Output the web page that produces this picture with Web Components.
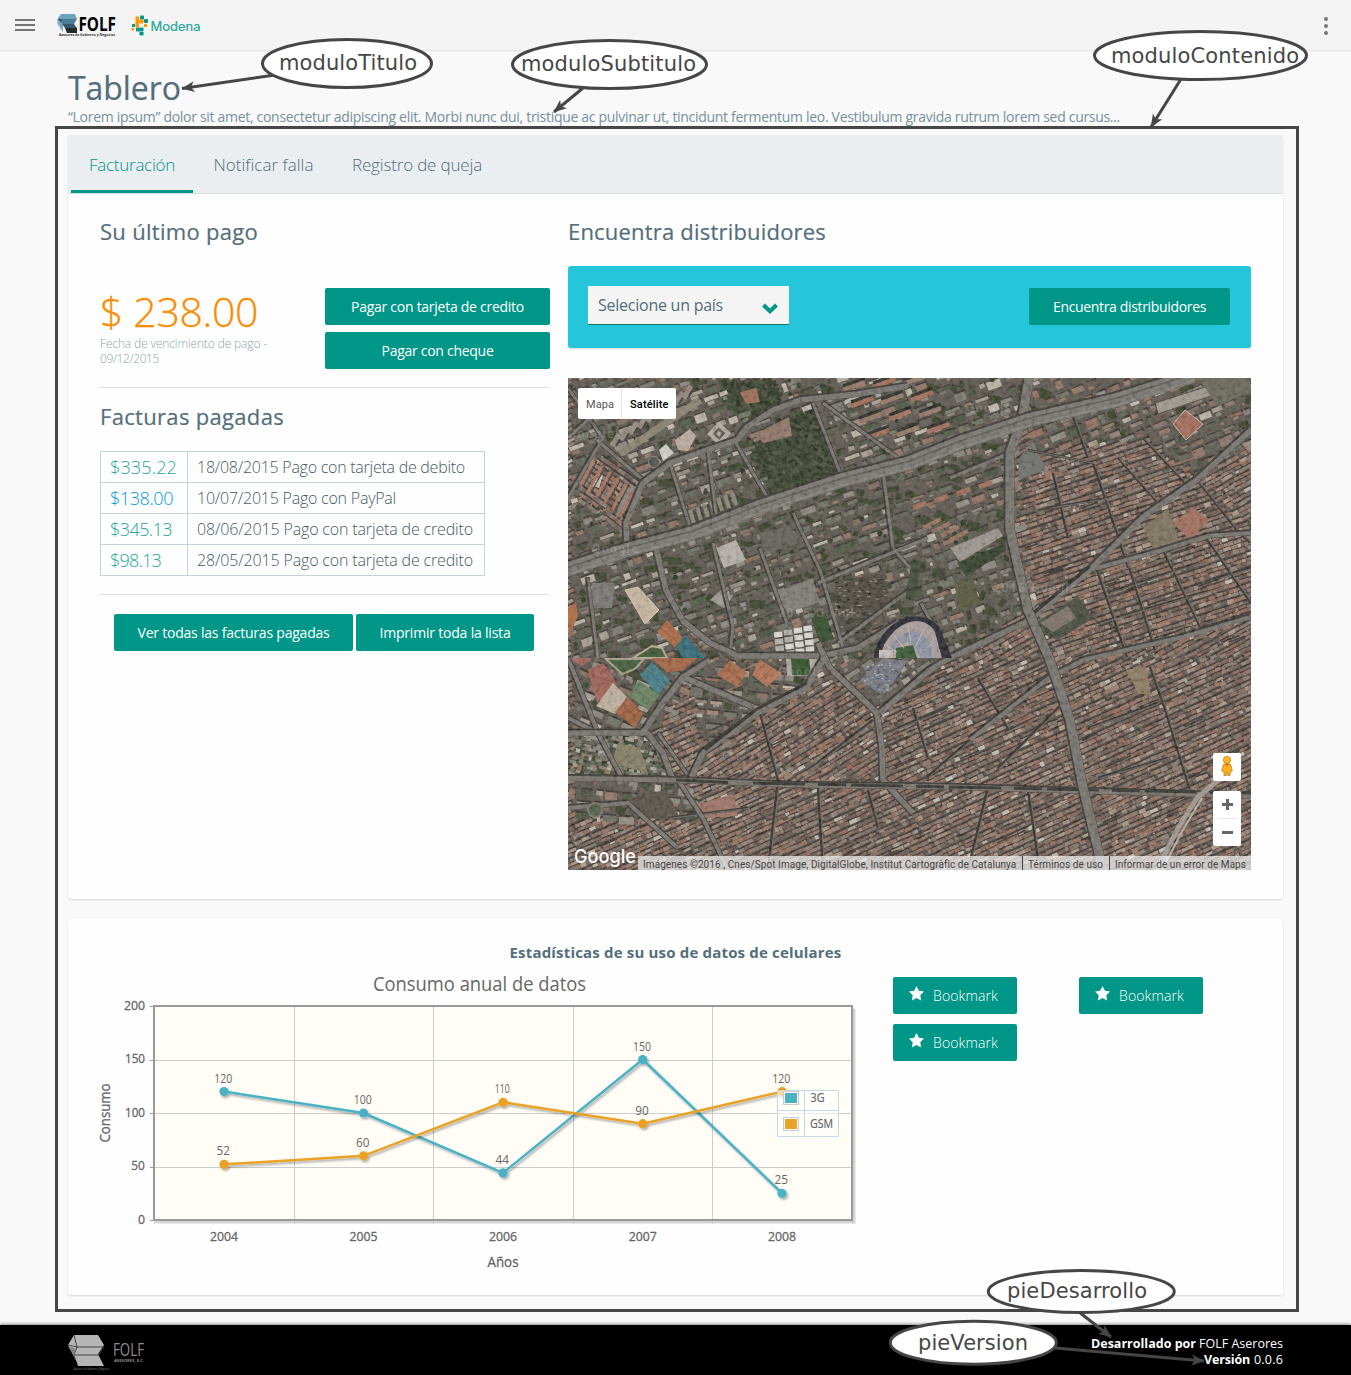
<!DOCTYPE html>
<html lang="es">
<head>
<meta charset="utf-8">
<title>Tablero</title>
<style>
html,body{margin:0;padding:0}
body{font-family:"Open Sans","Noto Sans",sans-serif;background:#f9f9f9;color:#546e7a;overflow:hidden}
</style>
</head>
<body>
<dash-app></dash-app>
<script>
const define = (name, html, setup) => customElements.define(name, class extends HTMLElement {
  connectedCallback() {
    if (this.shadowRoot) return;
    const t = document.createElement('template');
    t.innerHTML = html;
    this.attachShadow({ mode: 'open' }).appendChild(t.content.cloneNode(true));
    if (setup) setup(this, this.shadowRoot);
  }
});

define('dash-app', `
<style>
:host{display:flex;flex-direction:column;height:1375px;position:relative}
main{flex:1;padding:16px 68px 0;box-sizing:border-box}
h1{margin:0;font-weight:400;font-size:32px;line-height:41px;height:40px;color:#546e7a;-webkit-text-stroke:.2px #546e7a}
p{margin:0 0 8px;font-size:14px;line-height:20px;height:20px;color:#78909c}
billing-card{margin-bottom:20px}
</style>
<top-bar></top-bar>
<main>
<h1><fit-text w="113">Tablero</fit-text></h1>
<p><fit-text w="1052">“Lorem ipsum” dolor sit amet, consectetur adipiscing elit. Morbi nunc dui, tristique ac pulvinar ut, tincidunt fermentum leo. Vestibulum gravida rutrum lorem sed cursus...</fit-text></p>
<billing-card></billing-card>
<stats-card></stats-card>
</main>
<page-footer></page-footer>
<callout-layer></callout-layer>`);

define('top-bar', `
<style>
:host{display:flex;align-items:center;height:50px;background:#f4f4f4;border-bottom:1px solid #e5e5e5;box-shadow:0 1px 1px rgba(0,0,0,.03);flex:none}
svg{display:block;overflow:visible}
.burger{margin-left:15px}.folf{margin-left:21px}.mod{margin-left:11px}.dots{margin-left:auto;margin-right:20px}
</style>
<svg class="burger" width="20" height="50" fill="#757575"><path d="M0 19h20v2H0zM0 24h20v2H0zM0 29h20v2H0z"/></svg>
<svg class="folf" width="64" height="50" viewBox="56 0 64 50">
<path d="M61 14H75L77 19H57.500z" fill="#6ba3bd"/><path d="M57.500 19H63L61 23.500z" fill="#315c74"/><path d="M62 19H77L74 24H61z" fill="#4a7d98"/>
<path d="M57.500 19L63 25V32L57.500 24z" fill="#7fa9bd"/><path d="M62 24H74L77 28H65z" fill="#39586b"/><path d="M65 28H77V33H67z" fill="#24292c"/>
<text x="78.500" y="30.500" font-size="19.500" font-weight="700" fill="#000" textLength="37.500" lengthAdjust="spacingAndGlyphs">FOLF</text>
<text x="59" y="36" font-size="4" font-weight="700" fill="#333" textLength="56" lengthAdjust="spacingAndGlyphs">Asesores de Gobierno y Negocios</text></svg>
<svg class="mod" width="74" height="50" viewBox="131 0 74 50">
<g fill="#009688"><rect x="140" y="15.500" width="4" height="4" rx=".8"/><rect x="144" y="19" width="4" height="4" rx=".8"/><rect x="132" y="24" width="3" height="3" rx=".6"/><rect x="136" y="27.500" width="4" height="4" rx=".8"/><rect x="139.500" y="31.500" width="4" height="4" rx=".8"/><rect x="140" y="27.500" width="3.500" height="3.500" rx=".6"/></g>
<g fill="#ff9800"><rect x="135.500" y="16.500" width="3.500" height="3.500" rx=".6"/><rect x="139.500" y="19.500" width="4" height="4" rx=".8"/><rect x="135.500" y="20" width="4" height="4" rx=".8"/><rect x="135.500" y="24" width="3.500" height="3.500" rx=".6"/><rect x="144" y="24" width="3" height="3" rx=".6"/><rect x="131.500" y="28" width="2.500" height="2.500" rx=".6"/></g>
<text x="150.500" y="31" font-size="12.500" font-weight="400" font-family="Inter,sans-serif" fill="#26a69a" stroke="#26a69a" stroke-width=".2" textLength="50" lengthAdjust="spacingAndGlyphs">Modena</text></svg>
<svg class="dots" width="10" height="50" fill="#757575"><circle cx="5" cy="19" r="2"/><circle cx="5" cy="26" r="2"/><circle cx="5" cy="33" r="2"/></svg>`);

define('app-button', `
<style>
:host{display:flex;align-items:center;justify-content:center;height:37px;box-sizing:border-box;background:#009688;color:#fff;border-radius:2px;font-size:14px;line-height:20px}
</style><slot></slot>`, h => h.style.width = h.getAttribute('width') + 'px');

define('tab-bar', `
<style>
:host{display:flex;height:58px;background:#eaeef1;border-bottom:1px solid #dadee1;border-radius:3px 3px 0 0;padding-left:3px;font-size:17px;font-weight:300;line-height:24px;color:#546e7a;gap:2.5px}
.t{padding:18px 18px 0;height:40px}
.on{box-shadow:inset 0 -3px #009688;color:#009688}
</style>
<div class="t on"><fit-text w="86">Facturación</fit-text></div><div class="t"><fit-text w="100">Notificar falla</fit-text></div><div class="t"><fit-text w="130">Registro de queja</fit-text></div>`);

define('billing-card', `
<style>
:host{display:block;height:764px;background:#fefefe;border-radius:3px;box-shadow:0 1px 2px rgba(0,0,0,.14)}
.cols{display:flex;padding:22px 32px 0;gap:18px}
.l{width:450px}.r{width:683px}
h2{font-size:22px;line-height:30px;height:30px;font-weight:400;margin:0;color:#546e7a;-webkit-text-stroke:.2px #546e7a}
.pay{display:flex;justify-content:space-between;margin-top:42px}
.btns{display:flex;flex-direction:column;gap:7px}
.price{font-size:41px;line-height:46px;height:48px;font-weight:300;color:#fb8c00;-webkit-text-stroke:.3px #fb8c00}
.due{font-size:12px;line-height:15px;font-weight:300;color:#90a4ae;display:flex;flex-direction:column}
hr{border:0;height:1px;background:#dde0e2;margin:18px 2px 0 0}
.h{margin-top:13px}
.act{display:flex;gap:3px;margin:19px 0 0 14px}
.find{display:flex;justify-content:space-between;align-items:flex-start;box-sizing:border-box;height:82px;margin-top:20px;background:#26c6da;border-radius:3px;padding:20px 21px 0 20px;box-shadow:0 1px 2px rgba(0,0,0,.16)}
.sel{display:flex;justify-content:space-between;width:201px;box-sizing:border-box;height:39px;background:#f4f4f4;border-bottom:1px solid #00796b;padding:7px 10px 0 10px;font-size:16px;line-height:25px}
.sel svg{margin-top:9px}
.find app-button{margin-top:2px}
city-map{margin-top:30px}
</style>
<tab-bar></tab-bar>
<div class="cols">
<div class="l"><h2><fit-text w="158">Su último pago</fit-text></h2>
<div class="pay"><div><div class="price"><fit-text w="158">$ 238.00</fit-text></div><div class="due"><fit-text w="167">Fecha de vencimiento de pago -</fit-text><fit-text w="59">09/12/2015</fit-text></div></div>
<div class="btns"><app-button width="225"><fit-text w="173">Pagar con tarjeta de credito</fit-text></app-button><app-button width="225"><fit-text w="112">Pagar con cheque</fit-text></app-button></div></div>
<hr><h2 class="h"><fit-text w="184">Facturas pagadas</fit-text></h2>
<bill-table></bill-table><hr>
<div class="act"><app-button width="239"><fit-text w="192">Ver todas las facturas pagadas</fit-text></app-button><app-button width="178"><fit-text w="131">Imprimir toda la lista</fit-text></app-button></div></div>
<div class="r"><h2><fit-text w="258">Encuentra distribuidores</fit-text></h2>
<div class="find"><div class="sel"><fit-text w="125">Selecione un país</fit-text><svg width="18" height="13"><path d="M2.500 3L9 9.300L15.500 3" fill="none" stroke="#009688" stroke-width="4"/></svg></div><app-button width="201"><fit-text w="153">Encuentra distribuidores</fit-text></app-button></div>
<city-map></city-map></div></div>`);

define('bill-table', `
<style>
:host{display:block;margin-top:20px;width:385px}
table{border-collapse:collapse;width:385px;table-layout:fixed}
td{border:1px solid #c5d4dc;height:30px;padding:0 0 2px 9px;font-weight:300;font-size:16px;line-height:24px;color:#455a64;box-sizing:border-box}
td:first-child{width:87px;font-size:18px;color:#26a69a}
fit-text{vertical-align:middle}
tr{height:31px}
td.b{color:#039be5!important}
</style>
<table>
<tr><td><fit-text w="67">$335.22</fit-text></td><td><fit-text w="268">18/08/2015 Pago con tarjeta de debito</fit-text></td></tr>
<tr><td class="b"><fit-text w="63">$138.00</fit-text></td><td><fit-text w="199">10/07/2015 Pago con PayPal</fit-text></td></tr>
<tr><td><fit-text w="62">$345.13</fit-text></td><td><fit-text w="276">08/06/2015 Pago con tarjeta de credito</fit-text></td></tr>
<tr><td><fit-text w="51">$98.13</fit-text></td><td><fit-text w="276">28/05/2015 Pago con tarjeta de credito</fit-text></td></tr>
</table>`);

/* Procedural aerial view: blocks of roofs, avenues, parks and sport grounds. */
function aerial() {
  let s = 20160;
  const R = () => (s = (s * 1664525 + 1013904223) >>> 0) / 4294967296;
  const W = 683, H = 492;
  const poly = (p, f, x = '') => `<polygon points="${p}" fill="${f}" ${x}/>`;
  const inside = (x, y, p) => { let c = false; for (let i = 0, j = p.length - 1; i < p.length; j = i++) if ((p[i][1] > y) !== (p[j][1] > y) && x < (p[j][0] - p[i][0]) * (y - p[i][1]) / (p[j][1] - p[i][1]) + p[i][0]) c = !c; return c; };
  const pts = t => t.split(' ').map(a => a.split(',').map(Number));
  const brick = ['#8e6e61', '#80675c', '#967869', '#755d53', '#9e7e6f', '#87766d', '#6a5a52', '#8c7e74', '#7b6c63', '#ab9686', '#946b5b'];
  const grey = ['#7a7870', '#696a60', '#88847b', '#585c4e', '#4e5643', '#908b80', '#5f6057', '#8e7264', '#a39c90', '#454d3b', '#6d7064', '#826a5d', '#bab3a7'];
  const green = ['#2e3828', '#38422d', '#293221', '#434b34', '#343d2b', '#4b503a'];
  const all = pts('-20,-20 710,-20 710,520 -20,520'), south = pts('-20,280 710,280 710,520 -20,520');
  const zones = [
    { p: pts('174,62 225,32 245,29 272,99 205,119'), c: green, a: .4, t: 2 },
    { p: pts('150,0 205,0 212,24 176,42 152,20'), c: green, a: .4, t: 2 },
    { p: pts('2,119 29,69 75,102 54,152'), c: brick, a: .62, t: 0 },
    { p: pts('0,280 135,280 80,356 0,355'), c: grey, a: .4, t: 1 },
    { p: pts('0,355 80,356 105,400 0,400'), c: green.concat(grey), a: .2, t: 2 },
    { p: pts('0,403 110,403 135,440 0,440'), c: grey, a: .1, t: 1 },
    { p: pts('0,0 460,0 442,75 442,152 460,232 380,280 0,280'), c: grey, a: -.35, t: 1 },
    { p: pts('460,0 683,0 683,60 629,102 575,60 460,72'), c: grey.concat(brick), a: -.4, t: 1 },
    { p: pts('258,280 380,280 312,335'), c: grey, a: -.6, t: 1 },
    { p: pts('115,299 142,282 250,282 239,309 135,375'), c: grey.concat(brick), a: .1, t: 1 },
    { p: pts('135,375 240,309 282,309 310,335 315,402 122,402'), c: brick, a: -.55, t: 0 },
    { p: pts('460,72 575,60 683,152 683,239 482,282 442,152'), c: brick, a: -.32, t: 0 },
    { p: south, c: brick, a: -.42, t: 0 },
    { p: all, c: brick, a: -.5, t: 0 },
  ];
  const order = [], b = {};
  const quad = (x, y, w, h, a, c) => {
    const u = Math.cos(a), v = Math.sin(a);
    const f = (i, j) => (x + i * u - j * v).toFixed(1) + ' ' + (y + i * v + j * u).toFixed(1);
    if (!b[c]) { b[c] = []; order.push(c); }
    b[c].push('M' + f(0, 0) + 'L' + f(w, 0) + 'L' + f(w, h) + 'L' + f(0, h) + 'z');
  };
  b['#38332f'] = []; order.push('#38332f');
  b['#37402c'] = []; order.push('#37402c');
  zones.forEach(z => {
    const u = Math.cos(z.a), v = Math.sin(z.a);
    let row = 0;
    for (let q = -620; q < 900;) {
      const rh = z.t === 1 ? 5 + R() * 5 : z.t === 2 ? 4 : 3.2 + R() * 1.8;
      row++;
      const gap = z.t === 1 ? 2 + R() * 3 : z.t === 2 ? -1 : (row % 3 ? .3 : 1.8);
      for (let k = -420; k < 900;) {
        const len = z.t === 1 ? 4 + R() * 12 : z.t === 2 ? 3 + R() * 3 : 2.5 + R() * 6;
        const sp = z.t === 1 ? 1.5 + R() * 4 : z.t === 2 ? -1 : R() < .08 ? 3 : .3;
        const x = k * u - q * v, y = k * v + q * u;
        k += len + sp;
        if (x < -12 || x > W + 5 || y < -12 || y > H + 5) continue;
        if (zones.find(o => inside(x, y, o.p)) !== z) continue;
        const r = R();
        if (z.t === 1 && r < .17) { quad(x, y, len, rh, z.a + R(), '#37402c'); continue; }
        let c = z.c[R() * z.c.length | 0];
        if (z.t !== 2 && r > .975) c = '#c5bcb0';
        quad(x + 1, y - 1.6, len, 2.5, z.a, '#38332f');
        if (z.t === 1 && r > .55) {
          quad(x, y, len, rh * .5, z.a, c);
          quad(x + rh * .4, y + rh * .5, len * .5, rh * .4, z.a, z.c[R() * z.c.length | 0]);
        } else quad(x + R() * .8, y + R() * .8, len, rh * (.65 + R() * .35), z.a, c);
        if (z.t === 0 && R() < .4) quad(x + R() * len, y + R() * 2, 1.6, 1.3, z.a, R() < .6 ? '#b8a293' : '#463f38');
      }
      q += rh + gap;
    }
  });
  const layer = order.map(c => `<path d="${b[c].join('')}" fill="${c}"/>`).join('');

  let rows = '';
  for (let i = 0; i < 110; i++) {
    const x = R() * W, y = 290 + R() * 202;
    if (x < 140 && y < 440) continue;
    const l = 12 + R() * 20, a = -.42;
    rows += `<path d="M${x.toFixed(1)} ${y.toFixed(1)}l${(l * Math.cos(a)).toFixed(1)} ${(l * Math.sin(a)).toFixed(1)}" stroke="${R() < .5 ? '#3b3531' : '#9c6f5c'}" stroke-width="1.600"/>`;
  }
  for (let i = 0; i < 60; i++) {
    const x = 450 + R() * 220, y = 80 + R() * 185, l = 10 + R() * 18;
    rows += `<path d="M${x.toFixed(1)} ${y.toFixed(1)}l${(l * .94).toFixed(1)} ${(-l * .33).toFixed(1)}" stroke="${R() < .5 ? '#38332f' : '#9c705d'}" stroke-width="1.600"/>`;
  }
  /* Tree canopy along the avenues and between the northern blocks. */
  for (let i = 0; i < 260; i++) {
    const x = R() * 450, y = R() * 275;
    rows += `<circle cx="${x.toFixed(1)}" cy="${y.toFixed(1)}" r="${(1 + R() * 1.8).toFixed(1)}" fill="${green[R() * 6 | 0]}"/>`;
  }
  const road = (d, w, c = '#75726d') => `<path d="${d}" stroke="#393632" stroke-width="${w + 2}" transform="translate(-.8 -.8)"/><path d="${d}" stroke="${c}" stroke-width="${w}"/>`;
  const alley = d => `<path d="${d}" stroke="#302d2b" stroke-width="2.500"/><path d="${d}" stroke="#68635e" stroke-width="1.200" transform="translate(1.600 .4)"/>`;
  const roads =
    alley('M529 192L559 279M559 182L587 272M595 172L632 249M525 85L549 155M549 155L560 190M629 102L669 152L683 165M635 155L683 225M485 95L500 160M500 25L520 80M550 80L590 125M575 60L620 108M530 245L640 213M540 215L630 185M650 200L683 190M460 72L525 85M480 130L540 120') +
    alley('M249 385L305 342M359 399L402 362M192 335L210 402M210 402L200 492M582 289L595 325L622 412M420 409L400 492M500 320L430 390M250 410L255 492M300 412L310 450M460 412L470 480M100 440L180 430M520 350L590 325M530 400L600 380M330 350L380 330M345 330L360 380M410 300L440 350') +
    road('M0 10L35 60L0 120M0 60L55 10M75 102L29 62M102 85L124 155M140 72L150 150M165 60L205 129M245 25L275 102M225 135L252 192L275 269M192 170L219 245M145 165L165 249L162 278M20 200L30 280M255 25L330 80M270 265L345 210M315 92L325 170L342 190M353 225L383 280M382 100L442 75M250 205L360 160M90 355L122 400', 3) +
    road('M522 192L595 172L640 158L683 155M110 402L135 440L160 492M0 340L30 355L55 402M0 280L30 355M0 430L60 425L110 470', 4) +
    road('M59 172L58 145L75 105L102 85L139 72L169 62L179 49L205 32L232 22L290 16L340 8M88 170L98 212L115 243L142 265L170 278L255 278L290 270L330 245', 5.5) +
    road('M-8 355H75L92 329L115 299L142 282M75 350L95 375L105 402M115 299L185 329M122 402L135 375L189 335L239 309L256 280M250 265L262 290L282 309L309 335L314 369L315 402L345 435M312 335L362 292L382 280L462 242L522 192L575 139L629 102L683 52', 5.5) +
    `<path d="M137 372L189 331L239 305M402 362L482 295M462 238L522 188" stroke="#302e2c" stroke-width="3"/>` +
    road('M402 362L482 299L515 282L615 259L683 239', 4) +
    road('M-8 400L102 402L225 407L382 409L683 418', 5, '#77716b') + '<path d="M108 402L170 405M185 405L683 415" stroke="#33302e" stroke-width="3" stroke-dasharray="52 13 28 5"/>' +
    road('M462 -5L454 42L442 75L442 152L460 232L482 282L502 342L515 409L535 492', 9) +
    road('M-8 194L59 172L125 155L192 129L275 102L342 85L392 65L462 42L549 22L625 -2', 14, '#787571') +
    `<path d="M-8 192L59 170L125 153L192 127L275 100L342 83L392 63L462 40L549 20L625 -4" stroke="#54584c" stroke-width="1.500"/><path d="M-8 199L59 177L125 160L192 134L275 107L342 90L392 70L462 47L549 27L640 -2" stroke="#918d86" stroke-width=".8"/>` +
    `<path d="M589 492L610 450L629 420L655 398" stroke="#a19990" stroke-width="5"/><path d="M594 492L616 450L634 420" stroke="#b9b0a7" stroke-width="2"/><path d="M349 182L342 222" stroke="#3d4635" stroke-width="10"/>`;
  let white = '';
  for (let i = 0; i < 4; i++) for (let j = 0; j < 4; j++) white += `<rect x="${207 + i * 10}" y="${252 + j * 7 - i}" width="8.500" height="5.500" fill="${R() < .3 ? '#b5b0aa' : '#dedad4'}" transform="rotate(-6 228 265)"/>`;
  let sheds = '';
  for (let i = 0; i < 7; i++) sheds += `<path d="M${122 + i * 7} ${132 - i * 3}l4 13" stroke="#8b8579" stroke-width="4"/><path d="M${125.500 + i * 7} ${132 - i * 3}l4 13" stroke="#3a3d33" stroke-width="1.500"/>`;
  for (let i = 0; i < 9; i++) sheds += `<path d="M${44 + i * 9} ${68 - i * 6}l7 -12" stroke="#92897e" stroke-width="5"/><path d="M${48 + i * 9} ${68 - i * 6}l7 -12" stroke="#403c38" stroke-width="2"/>`;
  for (let i = 0; i < 6; i++) sheds += `<path d="M${26 + i * 8} ${82 + i * 6}l-14 26" stroke="#a8735a" stroke-width="3"/><path d="M${29 + i * 8} ${83 + i * 6}l-14 26" stroke="#4e3e36" stroke-width="1.500"/>`;
  for (let i = 0; i < 12; i++) { const x = 275 + (i % 3) * 30 + (i / 3 | 0) * 8, y = 12 + (i / 3 | 0) * 16 - (i % 3) * 3; sheds += `<path d="M${x} ${y}l22 -8" stroke="${i % 2 ? '#a16c57' : '#947668'}" stroke-width="5"/><path d="M${x} ${y - 4}l22 -8" stroke="#2b2c28" stroke-width="3"/>`; }
  for (let i = 0; i < 4; i++) sheds += `<path d="M${345 + i * 22} ${130 - i * 7}l13 -5" stroke="#a06c57" stroke-width="5"/><path d="M${355 + i * 9} ${150 + i * 4}l18 -9" stroke="#986f5c" stroke-width="4"/>`;
  const sports = poly('57,212 70,209 91,232 77,246', '#c5b59d', 'stroke="#d3c9b5"') +
    poly('99,242 114,259 107,269 89,254', '#aa6743') + poly('109,270 117,257 137,280 115,280', '#2f6b76') +
    poly('65,280 84,268 94,270 99,280', '#3d5733', 'stroke="#b9ad93" stroke-width="2"') +
    poly('38,281 76,281 67,291 54,296', '#3f5937', 'stroke="#a8a08b" stroke-width="2"') +
    poly('0,280 25,280 14,288', '#a3655a') + poly('20,292 35,285 49,305 29,325', '#a06155') +
    poly('45,305 59,319 47,336 28,328', '#c0b1a0') + poly('72,297 84,284 102,302 90,317', '#427a85') +
    poly('70,302 92,317 80,332 62,319', '#66805e') + poly('60,319 75,335 67,350 47,334', '#9f5f3d') +
    poly('83,280 130,280 113,293 99,294', '#a36343') + poly('162,282 179,295 169,309 149,297', '#a76846') +
    poly('192,282 214,295 199,309 184,297', '#b07252') + poly('218,280 250,280 248,297 219,298', '#b0a69d') + poly('223,280 241,280 243,297 224,297', '#2f4f2c') +
    poly('243,240 258,237 266,261 252,265', '#30482a') + poly('206,215 245,200 251,224 220,235', '#7d7975') +
    poly('0,230 8,224 10,238 0,260', '#aa6840') + poly('43,385 50,365 72,370 80,395', '#827b63') +
    poly('60,420 98,412 113,442 78,440', '#575046') + poly('131,426 166,416 170,438 138,440', '#9c7265') +
    poly('292,302 315,280 340,283 315,318', '#77787e') +
    poly('44,230 47,205 24,205 22,230', '#777571') + poly('142,222 153,212 165,218 156,230', '#9a958d') +
    '<g stroke="#4e2c25" stroke-opacity=".35"><path d="M24 298L45 304M28 314L42 296M54 327L71 341M62 335L70 327M92 250L110 264M156 289L174 303M190 304L205 290M77 290L96 309M67 311L85 325"/></g>' +
    poly('54,110 73,108 64,128 48,140', '#85817b') + '<path d="M24 103L35 97L31 110L25 108z" fill="#c9c8c3"/>' +
    poly('107,62 122,51 128,58 120,73 110,72', '#baaa9f') + '<g transform="rotate(42 151 55)"><rect x="143" y="47" width="17" height="17" fill="#b3aba0"/><rect x="147" y="51" width="9" height="9" fill="#605a54"/><rect x="149.500" y="53.500" width="4" height="4" fill="#b6aca0"/></g><circle cx="86" cy="84" r="5.500" fill="#4c5048" stroke="#85887e"/>' +
    '<path d="M52 76L132 22" stroke="#88816f" stroke-width="7"/>' +
    poly('91,72 98,66 106,75 95,83', '#d0d0c8') + poly('185,57 221,39 224,58 196,65', '#8c7365') + poly('172,14 188,10 192,24 178,26', '#996955') +
    poly('148,170 168,162 178,182 156,190', '#b5b1a9') + poly('190,155 222,148 232,165 198,175', '#605f58') +
    poly('450,82 465,62 478,92 451,101', '#6d6e6a') + poly('605,46 617,32 635,46 618,62', '#a16959', 'stroke="#c5bdb3"') +
    poly('587,25 662,1 672,8 590,36', '#9e988d', 'stroke="#4d4a44"') + poly('630,0 682,0 682,14 650,28', '#676659') +
    poly('605,145 625,130 642,142 622,162', '#a06d5c') + poly('575,150 600,130 612,165 585,170', '#7c715c') + poly('382,170 430,150 435,158 392,184', '#9a948d') +
    poly('390,185 437,165 438,172 398,199', '#303d29') + poly('386,205 405,200 412,225 392,235', '#55573e') + poly('558,292 578,288 583,318 570,315', '#8c785e') +
    poly('460,250 510,218 525,240 490,262', '#45493d') + poly('472,245 500,228 508,240 485,254', '#7a7166') +
    poly('267,203 318,195 321,228 291,263 270,250', '#4e4840');
  let graves = '';
  for (let i = 0; i < 130; i++) { const x = 267 + R() * 50, y = 200 + R() * 55; if (x - 267 + (y - 200) * .7 < 68) graves += `<rect x="${x.toFixed(1)}" y="${y.toFixed(1)}" width="3" height="1.200" fill="${R() < .4 ? '#958a79' : '#272a20'}"/>`; }
  let cars = '';
  for (let i = 0; i < 90; i++) { const x = 296 + R() * 36, y = 284 + R() * 28; if (x - 292 + (318 - y) * .1 > 4 && x + y < 632) cars += `<rect x="${x.toFixed(1)}" y="${y.toFixed(1)}" width="2" height="1.200" fill="${['#b0b2b6', '#42506f', '#66709a'][R() * 3 | 0]}"/>`; }
  const stadium = '<g clip-path="url(#north)"><path d="M306 276C314 242 352 226 371 249L384 280H306z" fill="#25282e"/><path d="M312 280C318 248 353 230 367 254L374 280z" fill="#a89c9c"/><path d="M318 280C326 254 351 243 362 266L365 280z" fill="#8d91a3"/><path d="M323 280C330 262 345 257 352 280z" fill="#b1a39f"/><path d="M328 280V270L345 267L349 280z" fill="#355a33"/><path d="M316 266L329 274M325 256L336 270M340 248L343 265M356 251L348 268M366 264L352 275" stroke="#cdc2bd" stroke-width=".8"/></g><path d="M311 272h14v8h-14z" fill="#c6bdbb"/>';
  const marks = [['Google', 24, 175], ['2015 Google', 425, 214], ['2015 Google', 210, 239], ['Google', 210, 298], ['Google', 398, 34], ['Google', 0, 60]]
    .map(m => `<text x="${m[1]}" y="${m[2]}">${m[0]}</text>`).join('');
  return `<svg width="683" height="492" viewBox="0 0 683 492"><defs><clipPath id="north"><rect width="683" height="280"/></clipPath>
  <filter id="grain" x="0" y="0" width="100%" height="100%"><feTurbulence type="fractalNoise" baseFrequency=".22" numOctaves="3" seed="4"/><feColorMatrix values="1.400 0 0 0 -.3  1.400 0 0 0 -.31  1.400 0 0 0 -.33  0 0 0 0 .14"/></filter>
  <filter id="soft" x="0" y="0" width="100%" height="100%"><feGaussianBlur stdDeviation=".3"/></filter></defs>
  <g filter="url(#soft)"><rect width="683" height="492" fill="#5a544e"/>${layer}<g fill="none">${rows}</g>${sports}${graves}${cars}${white}${sheds}
  <g fill="none" stroke-linejoin="round">${roads}</g>${stadium}
  <ellipse cx="27" cy="432" rx="7" ry="7" fill="#4d5b45" stroke="#77736b" stroke-width="2"/></g>
  <rect width="683" height="492" filter="url(#grain)"/>
  <g font-family="Roboto,sans-serif" font-weight="700" font-size="12" letter-spacing="1.500" fill="#fff" opacity=".14" aria-hidden="true">${marks}</g></svg>`;
}

define('city-map', `
<style>
:host{display:block;position:relative;width:683px;height:492px;overflow:hidden;font-family:Roboto,sans-serif}
#pic svg{display:block}
.type{position:absolute;left:10px;top:10px;display:flex;height:31px;background:#fff;border-radius:2px;font-size:11px;line-height:33px;color:#565656}
.type div{padding:0 7px 0 8px}.type .on{color:#000;font-weight:500;border-left:1px solid #e6e6e6}
.logo{position:absolute;left:4px;bottom:0;overflow:visible}
.attr{position:absolute;right:0;bottom:0;width:613px;height:14px;box-sizing:border-box;display:flex;background:rgba(245,245,245,.7);font-size:10px;line-height:17px;color:#444;padding-left:5px}
.attr i{width:1px;background:#444;height:14px;margin:0 5px 0 6px}
.peg,.zoom{position:absolute;right:10px;width:28px;background:#fff;border-radius:2px}
.peg{top:375px;height:28px}.zoom{top:413px;height:55px}
svg{display:block}
</style>
<div id="pic"></div>
<div class="type"><div><fit-text w="28">Mapa</fit-text></div><div class="on"><fit-text w="38.500">Satélite</fit-text></div></div>
<svg class="logo" width="70" height="30"><text x="2" y="22.500" font-family="Inter,sans-serif" font-size="19" font-weight="500" fill="#fff" textLength="62" lengthAdjust="spacingAndGlyphs">Google</text></svg>
<div class="attr"><fit-text w="373">Imágenes ©2016 , Cnes/Spot Image, DigitalGlobe, Institut Cartogràfic de Catalunya</fit-text><i></i><fit-text w="75">Términos de uso</fit-text><i></i><fit-text w="131">Informar de un error de Maps</fit-text></div>
<svg class="peg" viewBox="0 0 28 28"><circle cx="14" cy="7" r="3.700" fill="#fbb41f" stroke="#c98e28" stroke-width=".8"/><path d="M10.300 11.500Q14 9.500 17.700 11.500L19.300 18L17.500 18.500L17 22.500H14.700V19H13.300V22.500H11V18.500L8.700 18z" fill="#fbb41f" stroke="#ba8225" stroke-width=".8"/><path d="M11.500 11L14 13.500L16.500 11z" fill="#ed6b22"/></svg>
<svg class="zoom" viewBox="0 0 28 55"><path d="M9 13.500H20M14.500 8V19M9 41.500H20" stroke="#666" stroke-width="3"/><path d="M5 27.500H24" stroke="#e6e6e6"/></svg>`,
(h, r) => { r.getElementById('pic').innerHTML = aerial(); });

define('stats-card', `
<style>
:host{display:block;height:376px;background:#fefefe;border-radius:3px;box-shadow:0 1px 2px rgba(0,0,0,.14)}
h3{margin:0;text-align:center;padding-top:22px;font-size:15px;line-height:22px;height:22px;font-weight:700;color:#546e7a}
.row{display:flex;margin-top:4px}
usage-chart{width:800px}
.marks{display:grid;grid-template-columns:124px 124px;gap:10px 62px;align-content:start;margin:10px 0 0 25px}
svg{margin:-5px 9px 0 0}
app-button{font-weight:300;padding-right:3px}
</style>
<h3><fit-text w="332">Estadísticas de su uso de datos de celulares</fit-text></h3>
<div class="row"><usage-chart></usage-chart><div class="marks"></div></div>`,
(h, r) => {
  r.querySelector('.marks').innerHTML = '<app-button width="124"><svg width="15" height="15" viewBox="0 0 15 15"><path d="M7.500 0L9.900 4.700L15 5.500L11.300 9.200L12.100 14.500L7.500 12L2.900 14.500L3.700 9.200L0 5.500L5.100 4.700z" fill="#fff"/></svg><fit-text w="65">Bookmark</fit-text></app-button>'.repeat(3);
});

define('usage-chart', `
<style>:host{display:block}svg{display:block}</style><div></div>`,
(h, r) => {
  const xs = [224, 363.5, 503, 642.7, 782], years = [2004, 2005, 2006, 2007, 2008];
  const Y = v => 1220 - v * 1.07;
  const T = (x, y, t, w, fs = 12, extra = '') => `<text x="${x}" y="${y}" text-anchor="middle" font-size="${fs}" textLength="${w}" lengthAdjust="spacingAndGlyphs" ${extra}>${t}</text>`;
  const series = (v, c) => {
    const p = v.map((a, i) => xs[i] + ',' + Y(a)).join(' ');
    return `<g filter="url(#sh)"><polyline points="${p}" fill="none" stroke="${c}" stroke-width="2.500"/>${v.map((a, i) => `<circle cx="${xs[i]}" cy="${Y(a)}" r="4.600" fill="${c}"/>`).join('')}</g>`;
  };
  const a = [120, 100, 44, 150, 25], b = [52, 60, 110, 90, 120];
  r.querySelector('div').innerHTML = `<svg width="800" height="320" viewBox="68 967 800 320">
  <defs><filter id="sh" x="-5%" y="-10%" width="112%" height="125%"><feDropShadow dx="1.500" dy="2" stdDeviation="1" flood-opacity=".32"/></filter></defs>
  <path d="M853.500 1008V1221.500H155" fill="none" stroke="#000" stroke-opacity=".1" stroke-width="3"/><path d="M854.500 1009V1222.500H156" fill="none" stroke="#000" stroke-opacity=".07" stroke-width="3"/>
  <rect x="154" y="1006" width="698" height="214" fill="#fffdf6"/>
  <path d="M294.500 1006V1224M433.500 1006V1224M573.500 1006V1224M712.500 1006V1224M150 1060.500H852M150 1113.500H852M150 1167.500H852M154.500 1220V1224M852.500 1220V1224M150 1006.500H154M150 1220.500H154" stroke="#ccc"/>
  <path d="M150 1006.500H154M150 1060.500H154M150 1113.500H154M150 1167.500H154M150 1220.500H154" stroke="#999"/>
  <rect x="154" y="1006" width="698" height="214" fill="none" stroke="#999" stroke-width="2"/>
  ${series(a, '#4bb2c5')}${series(b, '#eaa228')}
  <g fill="#666">${T(479.500, 991, 'Consumo anual de datos', 213, 19.500)}
  ${[...a, ...b].map((v, i) => T(xs[i % 5] - .7, Y(v) - 9, v, v > 99 ? (v === 110 ? 15 : 18) : 13.5, 12)).join('')}
  <g stroke="#666" stroke-width=".3">${years.map((v, i) => T(xs[i], 1241, v, 28, 12)).join('')}
  ${T(134.500, 1010, 200, 21)}${T(135, 1063, 150, 20)}${T(135, 1117, 100, 20)}${T(138, 1170, 50, 13.5)}${T(141.500, 1224, 0, 7)}
  ${T(503, 1267, 'Años', 31, 14)}${T(0, 0, 'Consumo', 59, 14, 'transform="translate(109.500 1113) rotate(-90)"')}</g></g>
  <rect x="777" y="1090" width="62" height="47" fill="#fff" fill-opacity=".6"/>
  <path d="M777.500 1090.500H838.500V1136.500H777.500zM804.500 1090V1136M777 1110.500H838" fill="none" stroke="#c5d9e2"/>
  <rect x="783.500" y="1091.500" width="15" height="13" fill="#fff" stroke="#ccc"/><rect x="785" y="1093" width="12" height="10" fill="#4bb2c5"/>
  <rect x="783.500" y="1117.500" width="15" height="13" fill="#fff" stroke="#ccc"/><rect x="785" y="1119" width="12" height="10" fill="#eaa228"/>
  <g fill="#666" stroke="#666" stroke-width=".2">${T(817.500, 1102, '3G', 14, 12)}${T(821.500, 1128, 'GSM', 23, 12)}</g></svg>`;
});

define('page-footer', `
<style>
:host{display:flex;justify-content:space-between;flex:none;height:50px;background:#000;color:#fff;padding:0 68px;font-size:12.5px;line-height:16px;box-shadow:0 -1px 3px rgba(0,0,0,.45)}
.c{display:flex;flex-direction:column;align-items:flex-end;padding-top:11px}
.c div{display:flex;gap:3px}.c div+div{gap:4px}
b{font-weight:700}svg{display:block;overflow:visible}
</style>
<svg width="84" height="50" viewBox="68 1325 84 50"><path d="M74 1335H98L104 1345L98 1354L104 1366H78L74 1354L68 1345z" fill="#b5b5b5"/><path d="M68 1345L77 1347H104M77 1347L74 1355H99M74 1335L77 1347M99 1355L104 1345" fill="none" stroke="#444"/><path d="M68 1346L76 1349L74 1355L79 1366z" fill="#858585"/>
<g fill="#8c8c8c"><text x="113" y="1356" font-size="18" textLength="31" lengthAdjust="spacingAndGlyphs">FOLF</text><text x="114" y="1362" font-size="4" textLength="30" font-weight="700" lengthAdjust="spacingAndGlyphs">ASESORES, S.C.</text><text x="74" y="1370" font-size="3" textLength="35" lengthAdjust="spacingAndGlyphs">Asesores de Gobierno y Negocios</text></g></svg>
<div class="c"><div><b><fit-text w="105">Desarrollado por</fit-text></b><fit-text w="84">FOLF Aserores</fit-text></div><div><b><fit-text w="46">Versión</fit-text></b><fit-text w="29">0.0.6</fit-text></div></div>`);

define('callout-layer', `
<style>:host{position:absolute;inset:0;pointer-events:none}svg{display:block}</style>
<svg width="1351" height="1375">
<defs><marker id="m" orient="auto" markerUnits="userSpaceOnUse" markerWidth="14" markerHeight="12" refX="12.500" refY="5.500"><path d="M13 5.500L0 0L3.500 5.500L0 11z" fill="#464646"/></marker></defs>
<rect x="56.500" y="127.500" width="1241" height="1183" fill="none" stroke="#464646" stroke-width="3"/>
<g stroke="#464646" stroke-width="3" fill="none" marker-end="url(#m)"><path d="M275 75L182 88.500"/><path d="M583 88L554 112"/><path d="M1181 79L1151 127"/><path d="M1079 1312L1111 1337"/><path d="M1055 1348L1204 1361"/></g>
<g stroke="#464646" stroke-width="3" fill="#fff"><ellipse cx="347" cy="63.500" rx="84.500" ry="24"/><ellipse cx="609.500" cy="64.500" rx="97" ry="24"/><ellipse cx="1200.500" cy="55.500" rx="106" ry="24"/><ellipse cx="1081.300" cy="1291.500" rx="93" ry="21"/><ellipse cx="973.300" cy="1342.700" rx="83" ry="21.500"/></g>
<g font-family="DejaVu Sans,sans-serif" font-size="21" fill="#464646"><text x="279" y="70" textLength="138">moduloTitulo</text><text x="521" y="71" textLength="175">moduloSubtitulo</text><text x="1111" y="63" textLength="188">moduloContenido</text><text x="1007" y="1298" textLength="140">pieDesarrollo</text><text x="918" y="1350" textLength="110">pieVersion</text></g>
</svg>`);

/* Inline text whose tracking is tuned so that it spans the width in "w". */
define('fit-text', `<style>:host{display:inline-block;white-space:nowrap;font-kerning:normal}span{display:inline-block}</style><span><slot></slot></span>`,
(h, r) => {
  const w = +h.getAttribute('w'), s = r.querySelector('span');
  const n = h.textContent.length;
  s.style.letterSpacing = ((w - s.getBoundingClientRect().width) / n) + 'px';
  h.style.width = w + 'px';
});
</script>
</body>
</html>
